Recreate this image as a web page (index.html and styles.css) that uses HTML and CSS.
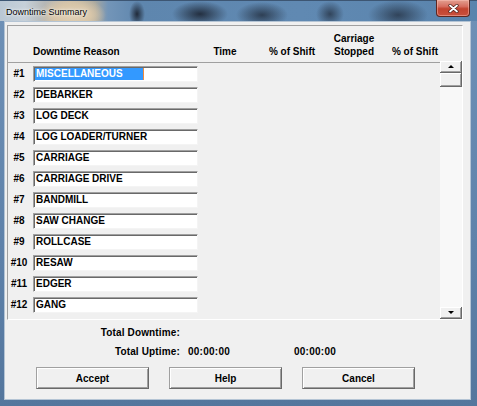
FILE: index.html
```html
<!DOCTYPE html>
<html>
<head>
<meta charset="utf-8">
<link rel="stylesheet" href="styles.css">
</head>
<body>
<div class="window">
  <div class="titlebar">
    <span class="title">Downtime Summary</span>
    <div class="close">
      <svg width="11" height="9" viewBox="0 0 11 9">
        <path d="M2 1.5 L9 7.5 M9 1.5 L2 7.5" stroke="#4a1d18" stroke-width="3.2" stroke-linecap="round"/>
        <path d="M2 1.5 L9 7.5 M9 1.5 L2 7.5" stroke="#ffffff" stroke-width="1.8" stroke-linecap="round"/>
      </svg>
    </div>
  </div>
  <div class="frame">
    <div class="client">
      <div class="panel">
        <div class="header">
          <div class="h-reason">Downtime Reason</div>
          <div class="h-time">Time</div>
          <div class="h-pct1">% of Shift</div>
          <div class="h-carr">Carriage<br>Stopped</div>
          <div class="h-pct2">% of Shift</div>
        </div>
        <div class="rows">
          <div class="row"><span class="num">#1</span><div class="box"><span class="sel">MISCELLANEOUS</span></div></div>
          <div class="row"><span class="num">#2</span><div class="box">DEBARKER</div></div>
          <div class="row"><span class="num">#3</span><div class="box">LOG DECK</div></div>
          <div class="row"><span class="num">#4</span><div class="box">LOG LOADER/TURNER</div></div>
          <div class="row"><span class="num">#5</span><div class="box">CARRIAGE</div></div>
          <div class="row"><span class="num">#6</span><div class="box">CARRIAGE DRIVE</div></div>
          <div class="row"><span class="num">#7</span><div class="box">BANDMILL</div></div>
          <div class="row"><span class="num">#8</span><div class="box">SAW CHANGE</div></div>
          <div class="row"><span class="num">#9</span><div class="box">ROLLCASE</div></div>
          <div class="row"><span class="num">#10</span><div class="box">RESAW</div></div>
          <div class="row"><span class="num">#11</span><div class="box">EDGER</div></div>
          <div class="row"><span class="num">#12</span><div class="box">GANG</div></div>
        </div>
        <div class="scrollbar">
          <div class="sb-btn"><span class="arrow-up"></span></div>
          <div class="sb-thumb"></div>
          <div class="sb-track"></div>
          <div class="sb-btn"><span class="arrow-down"></span></div>
        </div>
      </div>
      <div class="totals">
        <div class="t-label">Total Downtime:</div>
        <div></div>
        <div></div>
        <div class="t-label">Total Uptime:</div>
        <div class="t-val">00:00:00</div>
        <div class="t-val">00:00:00</div>
      </div>
      <div class="buttons">
        <div class="btn">Accept</div>
        <div class="btn">Help</div>
        <div class="btn">Cancel</div>
      </div>
    </div>
  </div>
</div>
</body>
</html>
```

FILE: styles.css
```css
* { box-sizing: border-box; }
html, body { margin: 0; padding: 0; }
body {
  width: 477px;
  height: 406px;
  overflow: hidden;
  font-family: "Liberation Sans", Arial, sans-serif;
  background: #5d80a8;
}
.window {
  width: 477px;
  height: 406px;
  display: flex;
  flex-direction: column;
  background: linear-gradient(180deg, #6f91b7 0%, #5f82aa 60%, #54769d 100%);
}
.titlebar {
  position: relative;
  flex: none;
  height: 21px;
  display: flex;
  align-items: center;
  padding-left: 6px;
  border-top: 1px solid #3d5673;
  background:
    radial-gradient(ellipse 8px 13px at 137px 13px, rgba(25,32,45,0.9) 0%, rgba(25,32,45,0) 100%),
    radial-gradient(ellipse 28px 13px at 200px 13px, rgba(25,32,45,0.85) 0%, rgba(25,32,45,0) 100%),
    radial-gradient(ellipse 26px 13px at 262px 14px, rgba(25,32,45,0.7) 0%, rgba(25,32,45,0) 100%),
    radial-gradient(ellipse 14px 13px at 330px 13px, rgba(25,32,45,0.65) 0%, rgba(25,32,45,0) 100%),
    radial-gradient(ellipse 30px 15px at 398px 14px, rgba(25,32,45,0.65) 0%, rgba(25,32,45,0) 100%),
    radial-gradient(ellipse 34px 18px at 72px 14px, #e0d0b6 0%, #d8c6a9 55%, rgba(200,185,160,0) 100%),
    linear-gradient(90deg, #b9c7d4 0px, #c6d0d9 25px, #b5b7b6 45px, #cdbfa8 70px, #a9a89f 95px, #7395b8 108px, #5e86ae 140px, #6089b2 300px, #5a84ad 477px);
}
.title {
  font-size: 9px;
  color: #000;
  text-shadow: 0 0 4px rgba(255,255,255,0.9), 0 0 2px rgba(255,255,255,0.9);
  margin-top: 2px;
}
.close {
  position: absolute;
  right: 7px;
  top: -1px;
  width: 34px;
  height: 17px;
  border: 1px solid #5e2720;
  border-top: none;
  border-radius: 0 0 4px 4px;
  background: linear-gradient(180deg, #e3a090 0%, #d66e60 40%, #c2432f 55%, #c9503c 100%);
  box-shadow: inset 0 0 0 1px rgba(255,200,190,0.45);
  display: flex;
  align-items: center;
  justify-content: center;
}
.frame {
  flex: 1;
  display: flex;
  padding: 0 6px 6px 4px;
}
.client {
  flex: 1;
  background: #f0f0f0;
  border: 1px solid #b4c4d4;
  padding: 3px 7px 0 2px;
  display: flex;
  flex-direction: column;
}
.panel {
  display: grid;
  grid-template-columns: 432px 22px;
  grid-template-rows: 37px 256px;
  border-top: 1px solid #a0a0a0;
  border-left: 1px solid #a0a0a0;
  border-right: 1px solid #ffffff;
  border-bottom: 1px solid #ffffff;
}
.header {
  grid-column: 1;
  grid-row: 1;
  display: grid;
  grid-template-columns: 25px 172px 40px 17px 60px 7px 50px 11px 50px;
  align-items: end;
  padding-bottom: 4px;
  border-bottom: 1px solid #a0a0a0;
  font-size: 10px;
  font-weight: bold;
  line-height: 13px;
  color: #000;
}
.h-reason { grid-column: 2; }
.h-time { grid-column: 3; text-align: center; }
.h-pct1 { grid-column: 5; text-align: center; white-space: nowrap; }
.h-carr { grid-column: 7; text-align: center; }
.h-pct2 { grid-column: 9; text-align: center; white-space: nowrap; }
.rows {
  grid-column: 1;
  grid-row: 2;
  display: flex;
  flex-direction: column;
  gap: 5px;
  padding-top: 3px;
}
.row {
  display: flex;
  align-items: center;
  height: 16px;
}
.num {
  width: 22px;
  margin-right: 3px;
  text-align: center;
  font-size: 10px;
  font-weight: bold;
  color: #000;
  margin-top: -2px;
}
.box {
  width: 165px;
  height: 16px;
  background: #ffffff;
  border-top: 1px solid #a0a0a0;
  border-left: 1px solid #a0a0a0;
  border-right: 1px solid #f4f4f4;
  border-bottom: 1px solid #f4f4f4;
  box-shadow: inset 1px 1px 0 #696969;
  padding-left: 2px;
  font-size: 10px;
  font-weight: bold;
  line-height: 14px;
  color: #000;
  white-space: nowrap;
}
.sel {
  display: inline-block;
  width: 109px;
  margin-left: -1px;
  padding-left: 1px;
  height: 12px;
  line-height: 12px;
  margin-top: 1px;
  vertical-align: top;
  background: #3399ff;
  color: #ffffff;
  border-right: 1px solid #f08a3c;
}
.scrollbar {
  grid-column: 2;
  grid-row: 2;
  margin-top: -2px;
  display: flex;
  flex-direction: column;
}
.sb-btn {
  height: 12px;
  flex: none;
  background: #f0f0f0;
  border-right: 1px solid #696969;
  border-bottom: 1px solid #696969;
  box-shadow: inset 1px 1px 0 #ffffff, inset -1px -1px 0 #a0a0a0;
  display: flex;
  align-items: center;
  justify-content: center;
}
.sb-thumb {
  height: 14px;
  flex: none;
  background: #f0f0f0;
  border-right: 1px solid #696969;
  border-bottom: 1px solid #696969;
  box-shadow: inset 1px 1px 0 #ffffff, inset -1px -1px 0 #a0a0a0;
}
.sb-track {
  flex: 1;
  background: #f8f8f8;
}
.arrow-up {
  width: 0;
  height: 0;
  border-left: 3px solid transparent;
  border-right: 3px solid transparent;
  border-bottom: 3px solid #000;
}
.arrow-down {
  width: 0;
  height: 0;
  border-left: 3px solid transparent;
  border-right: 3px solid transparent;
  border-top: 3px solid #000;
}
.totals {
  display: grid;
  grid-template-columns: 175px 98px auto;
  column-gap: 8px;
  grid-auto-rows: 19px;
  align-items: center;
  margin-top: 3px;
  margin-left: -2px;
  font-size: 10px;
  font-weight: bold;
  color: #000;
}
.t-label { justify-self: end; letter-spacing: 0.15px; }
.t-val { letter-spacing: 0.25px; }
.buttons {
  display: flex;
  gap: 20px;
  margin-top: 6px;
  padding-left: 29px;
}
.btn {
  width: 113px;
  height: 22px;
  display: flex;
  align-items: center;
  justify-content: center;
  background: #f0f0f0;
  border-top: 1px solid #a0a0a0;
  border-left: 1px solid #a0a0a0;
  border-right: 1px solid #696969;
  border-bottom: 1px solid #696969;
  box-shadow: inset 1px 1px 0 #ffffff, inset -1px -1px 0 #a0a0a0;
  font-size: 10px;
  font-weight: bold;
  color: #000;
}
```
